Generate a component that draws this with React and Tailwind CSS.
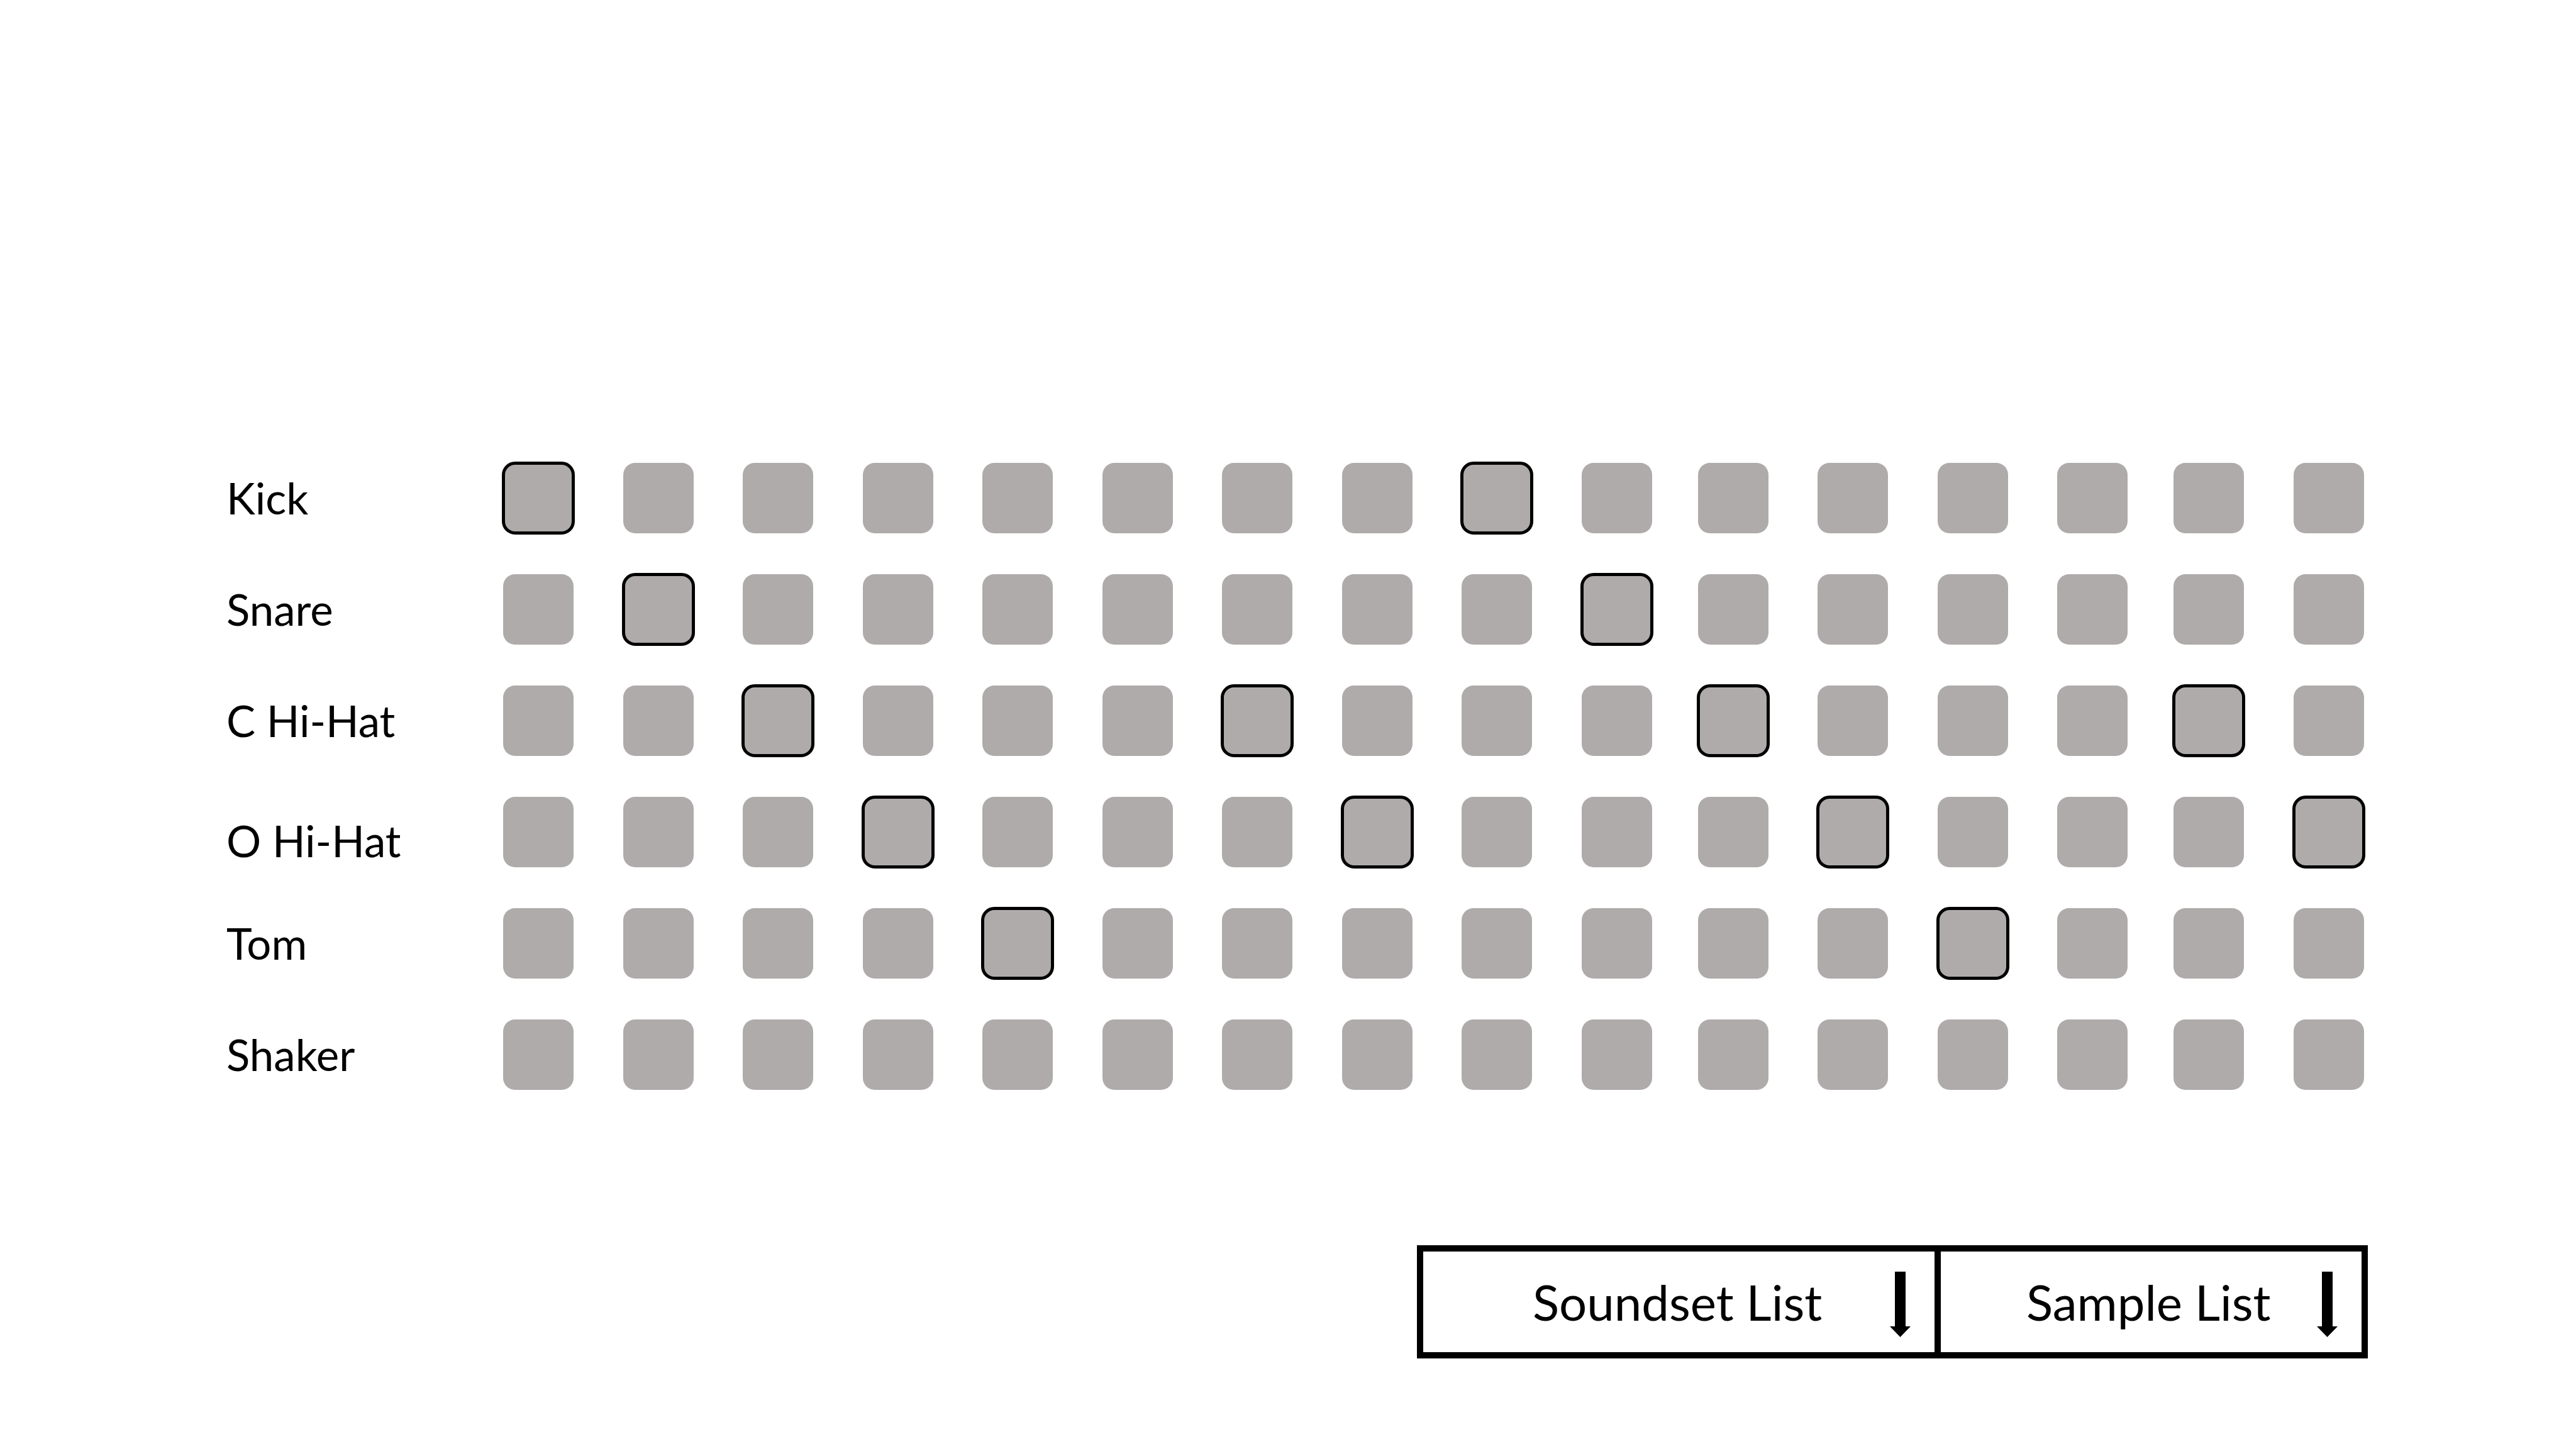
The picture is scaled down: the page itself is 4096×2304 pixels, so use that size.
const tracks = [
  { name: "Kick", active: [0, 8] },
  { name: "Snare", active: [1, 9] },
  { name: "C Hi-Hat", active: [2, 6, 10, 14] },
  { name: "O Hi-Hat", active: [3, 7, 11, 15], low: true },
  { name: "Tom", active: [4, 12] },
  { name: "Shaker", active: [] },
];

// Steps are laid out in three runs that share the row's width.
const runs = [
  [0, 1, 2, 3, 4, 5, 6, 7, 8, 9],
  [10, 11, 12, 13],
  [14, 15],
];

function Track({ name, active, low }) {
  const id = `track-${name.toLowerCase().replace(/\s/g, "-")}`;
  return (
    <div role="group" aria-labelledby={id} className="flex h-[112px] items-center">
      <span
        id={id}
        className={`w-[440px] shrink-0 text-[69px] leading-[84px] ${low ? "self-end" : ""}`}
      >
        {name}
      </span>
      <div className="grid flex-1 grid-cols-[1827fr_683fr_303fr] gap-x-[73px]">
        {runs.map((steps) => (
          <div key={steps[0]} className="flex justify-between">
            {steps.map((step) => (
              <input
                key={step}
                type="checkbox"
                aria-label={`${name} step ${step + 1}`}
                defaultChecked={active.includes(step)}
                className="size-[112px] cursor-pointer appearance-none rounded-[19px] bg-[#afabaa] outline-black checked:outline-5 checked:-outline-offset-3"
              />
            ))}
          </div>
        ))}
      </div>
    </div>
  );
}

function ListPicker({ label, box, field }) {
  return (
    <div className={`relative border-[10px] border-black ${box}`}>
      <select
        aria-label={label}
        className={`h-[160px] w-full cursor-pointer appearance-none bg-white text-[78px] leading-[94px] ${field}`}
      >
        <option>{label}</option>
      </select>
      <svg
        viewBox="0 0 33 104"
        aria-hidden="true"
        className="pointer-events-none absolute top-[32px] right-[38px] h-[104px] w-[33px]"
      >
        <path d="M8 0H25V87H33L16.5 104L0 87H8Z" fill="black" />
      </svg>
    </div>
  );
}

export default function App() {
  return (
    <main className="min-h-screen bg-white pt-[736px] font-['Lato','Open_Sans',sans-serif] text-black">
      <section aria-label="Drum pattern" className="flex flex-col gap-[65px] pr-[337px] pl-[360px]">
        {tracks.map((track) => (
          <Track key={track.name} {...track} />
        ))}
      </section>
      <div className="mt-[247px] flex justify-end pr-[331px]">
        <ListPicker label="Soundset List" box="w-[833px]" field="pl-[174px]" />
        <ListPicker label="Sample List" box="-ml-[10px] w-[689px]" field="pl-[136px]" />
      </div>
    </main>
  );
}
